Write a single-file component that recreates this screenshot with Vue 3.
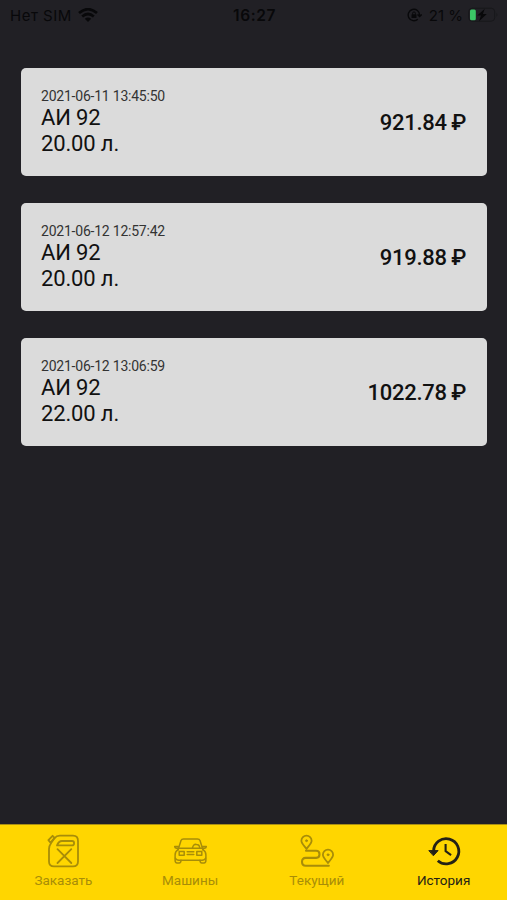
<script setup>
const orders = [
  { date: '2021-06-11 13:45:50', fuel: 'АИ 92', volume: '20.00 л.', price: '921.84 ₽' },
  { date: '2021-06-12 12:57:42', fuel: 'АИ 92', volume: '20.00 л.', price: '919.88 ₽' },
  { date: '2021-06-12 13:06:59', fuel: 'АИ 92', volume: '22.00 л.', price: '1022.78 ₽' },
]
const tabs = [
  { id: 'order', label: 'Заказать' },
  { id: 'cars', label: 'Машины' },
  { id: 'current', label: 'Текущий' },
  { id: 'history', label: 'История' },
]
const active = 'history'
</script>

<template>
  <div class="screen">
    <header class="status">
      <div class="carrier">
        <span class="sim">Нет SIM</span>
        <svg class="wifi" width="20" height="15" viewBox="0 0 20 15" fill="none" stroke="currentColor" stroke-width="2.7">
          <path d="M1 5.1Q10-2.7 19 5.1M4.2 8.5Q10 3.5 15.8 8.5" />
          <path d="M6.8 10.8Q10 8 13.2 10.8L10 14Z" fill="currentColor" stroke="none" />
        </svg>
      </div>
      <time class="clock">16:27</time>
      <div class="power">
        <svg class="lock" width="15" height="14" viewBox="0 0 15 14" fill="none" stroke="currentColor" stroke-width="1.4">
          <path d="M12.6 7A5.7 5.7 0 1 0 10.8 11.2M10.5 6.5L12.6 8.6L14.7 6.5" />
          <rect x="4.5" y="6.2" width="5" height="3.8" rx=".6" fill="currentColor" stroke="none" />
          <path d="M5.6 6.5V5.3a1.4 1.4 0 0 1 2.8 0V6.5" stroke-width="1" />
        </svg>
        <span class="percent">21 %</span>
        <svg class="battery" width="31" height="16" viewBox="0 0 31 16">
          <rect x=".7" y="1.2" width="26" height="13" rx="3.5" fill="none" stroke="#17171a" stroke-width="1" />
          <path d="M28.5 5.6q1.6 2.2 0 4.4z" fill="#17171a" />
          <rect x="2" y="2.6" width="5.8" height="10.6" rx="1.5" fill="#3bc866" />
          <path d="M16.8 1.7L9.2 8.6H13L11 14.2L18.8 7.1H14.9Z" fill="#08080a" />
        </svg>
      </div>
    </header>

    <main class="orders">
      <article v-for="order in orders" :key="order.date" class="card">
        <div class="details">
          <div class="date">{{ order.date }}</div>
          <div class="line">{{ order.fuel }}</div>
          <div class="line">{{ order.volume }}</div>
        </div>
        <div class="price">{{ order.price }}</div>
      </article>
    </main>

    <nav class="tabs">
      <div v-for="tab in tabs" :key="tab.id" class="tab" :class="{ active: tab.id === active }">
        <svg class="icon" viewBox="0 0 36 36" fill="none" stroke="currentColor" stroke-width="1.8" stroke-linecap="round" stroke-linejoin="round">
          <template v-if="tab.id === 'order'">
            <path d="M9.3 5.3Q11.6 2.7 14.8 2.7H28Q33 2.7 33 8V28.5Q33 33.4 28 33.4H9Q4 33.4 4 28.5V16Q4 12.8 6.3 9.7L9.6 5" />
            <path d="M4.9 9L3.4 7.2L7.6 2.8L9.6 4.8L5.5 9.5Z" />
            <path d="M12 12.4Q13.7 8 17 8H27Q29.1 8 29.1 10.2Q29.1 12.4 27 12.4Z" />
            <path d="M12.5 16.2L26.3 30M26.3 16.2L12.5 30" />
          </template>
          <g v-else-if="tab.id === 'cars'" stroke-width="1.5">
            <path d="M6 17L9 7.6Q9.6 6 11.5 6H25.5Q27.4 6 28 7.6L31 17" />
            <path d="M6.3 15.2H30.7M5.8 15.2H4.2Q2.7 15.2 2.7 13.5H6.3M31.2 15.2H32.8Q34.3 15.2 34.3 13.5H30.7" />
            <path d="M6 16.7Q3.1 18.5 3.1 22V27Q3.1 30 5 30H7.2Q9 30 9 27.3H28Q28 30 29.8 30H32Q33.9 30 33.9 27V22Q33.9 18.5 31 16.7" />
            <path d="M3.5 25.2Q4.2 27.3 9 27.3M33.5 25.2Q32.8 27.3 28 27.3M7.2 18.5H12.2V22.2H7.2ZM24.8 18.5H29.8V22.2H24.8ZM15.2 18.7H21.8M15.2 21.5H21.8" />
            <path d="M20.5 15Q21.2 10.7 24.5 11.5Q27.6 11.5 27.7 15" />
          </g>
          <template v-else-if="tab.id === 'current'">
            <path d="M7.5 16C5.8 13.3 2.4 10.5 2.4 7.7A5.1 5.1 0 0 1 12.6 7.7C12.6 10.5 9.2 13.3 7.5 16ZM29 30.1C27.3 27.4 23.9 24.6 23.9 21.8A5.1 5.1 0 0 1 34.1 21.8C34.1 24.6 30.7 27.4 29 30.1Z" />
            <circle cx="7.5" cy="7.7" r="1" fill="currentColor" stroke-width=".8" />
            <circle cx="29" cy="21.8" r="1" fill="currentColor" stroke-width=".8" />
            <path d="M7 17.7H17.2Q20.5 17.7 20.5 21.2T17.2 24.9H6.7Q3 24.9 3 28.8T6.7 32.7H29.8" stroke-width="2.1" />
          </template>
          <g v-else stroke-width="2.8">
            <path d="M7.6 19V18A12.6 12.6 0 1 1 11.8 27.7" stroke-linecap="butt" />
            <path d="M3.2 17.6H12.1L7.6 22.5Z" fill="currentColor" stroke-width="1" />
            <path d="M19.6 11V18.2L25.1 22.1" stroke-width="2.1" stroke-linecap="butt" />
          </g>
        </svg>
        <span class="label">{{ tab.label }}</span>
      </div>
    </nav>
  </div>
</template>

<style>
body {
  margin: 0;
  background: #212025;
}
</style>

<style scoped>
.screen {
  display: flex;
  flex-direction: column;
  height: 900px;
  background: #212025;
  font-family: Roboto, "Liberation Sans", sans-serif;
}
.status {
  display: grid;
  grid-template-columns: 1fr auto 1fr;
  align-items: center;
  height: 30px;
  padding: 0 8px 0 10px;
  color: #08080a;
  font-family: Inter, "Liberation Sans", sans-serif;
  font-size: 15px;
}
.carrier,
.power {
  display: flex;
  align-items: center;
}
.carrier {
  gap: 6px;
}
.sim {
  letter-spacing: .5px;
}
.clock {
  font-size: 15.5px;
  font-weight: 600;
  letter-spacing: .6px;
}
.power {
  justify-content: flex-end;
}
.percent {
  margin: 0 5px 0 7px;
}
.orders {
  flex: 1;
  display: flex;
  flex-direction: column;
  gap: 27px;
  padding: 38px 20px 0 21px;
}
.card {
  box-sizing: border-box;
  display: flex;
  align-items: center;
  justify-content: space-between;
  height: 108px;
  padding: 1px 21px 0 20px;
  border-radius: 5px;
  background: #dbdbdb;
  color: #111;
}
.date {
  margin-bottom: 1px;
  color: #333;
  font-size: 14px;
  line-height: 15px;
  letter-spacing: -.22px;
}
.line {
  font-size: 22px;
  line-height: 26px;
  letter-spacing: -.15px;
}
.price {
  padding-top: 1px;
  font-size: 22px;
  font-weight: 500;
  line-height: 26px;
  letter-spacing: -.3px;
  word-spacing: -.6px;
}
.tabs {
  box-sizing: border-box;
  display: grid;
  grid-template-columns: repeat(4, 1fr);
  height: 76px;
  border-top: 1px solid #a98f14;
  background: #ffd600;
}
.tab {
  display: flex;
  flex-direction: column;
  align-items: center;
  padding-top: 8px;
  color: #a88d08;
}
.tab.active {
  color: #242116;
}
.icon {
  width: 36px;
  height: 36px;
}
.label {
  margin-top: 3px;
  font-size: 13.5px;
  line-height: 16px;
}
</style>
